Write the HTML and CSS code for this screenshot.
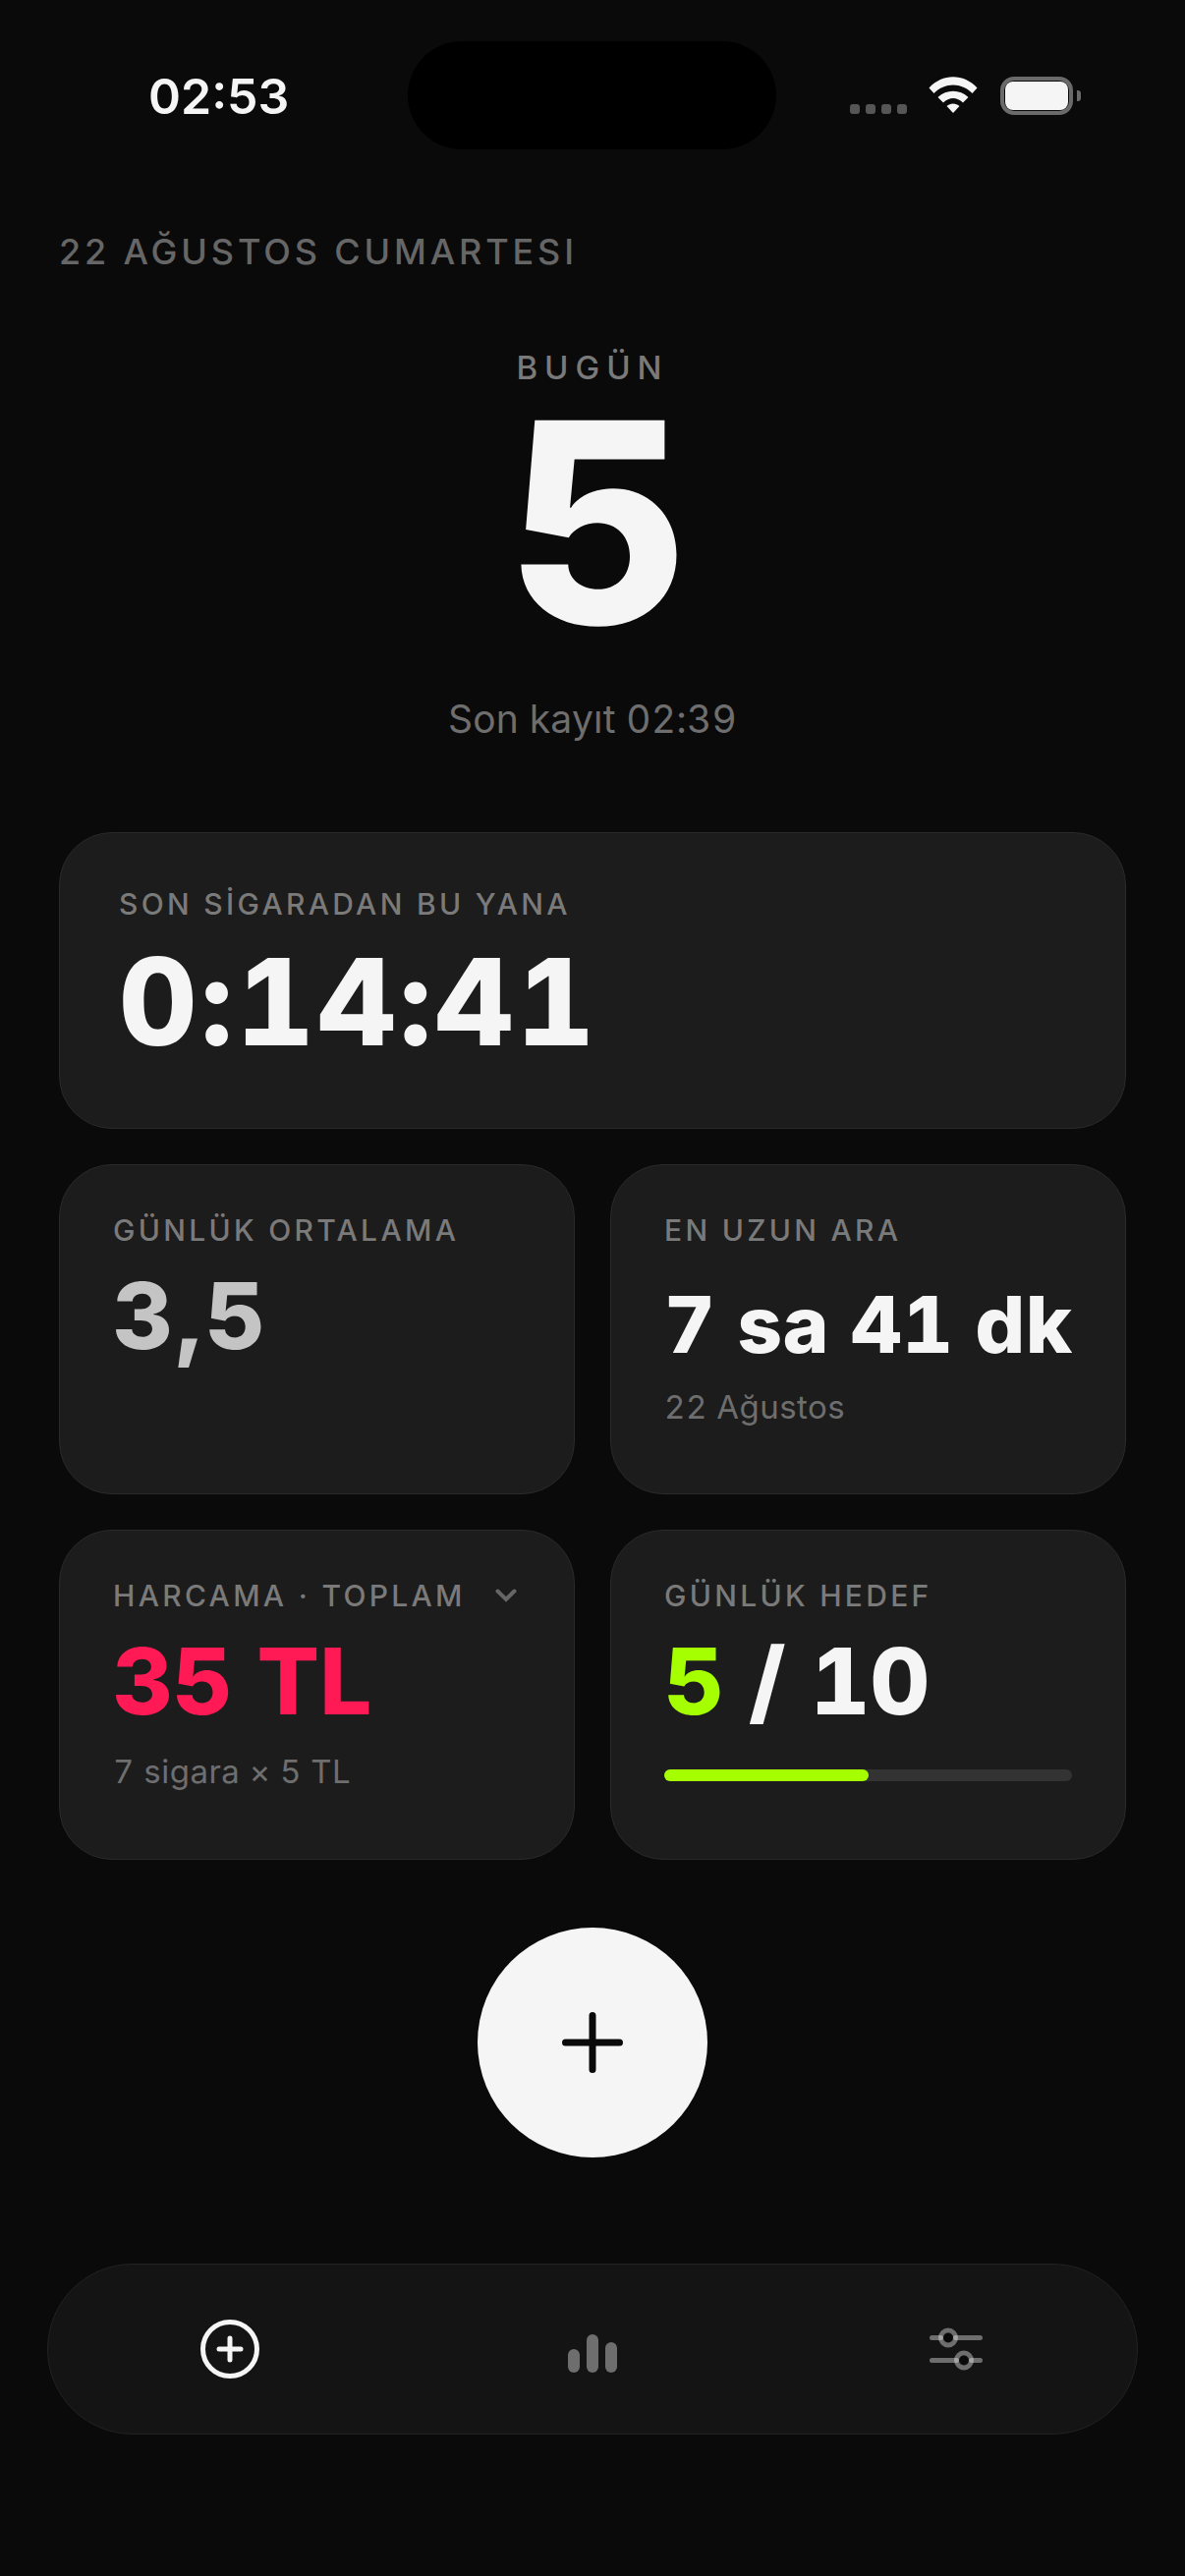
FILE: index.html
```html
<!DOCTYPE html>
<html lang="tr">

<head>
    <meta charset="UTF-8">
    <title>Sigara Takip</title>
    <link rel="stylesheet" href="styles.css">
</head>

<body>
    <div class="screen">
        <header class="status-bar">
            <span class="clock">02:53</span>
            <div class="island"></div>
            <div class="status-icons">
                <div class="signal"><i></i><i></i><i></i><i></i></div>
                <svg class="wifi" width="50" height="38" viewBox="0 0 50 38">
                    <path d="M0.5 11.5 C14 -3.5 36 -3.5 49.5 11.5 L44.5 17 C33.5 5.5 16.5 5.5 5.5 17 Z" fill="#f5f5f5"/>
                    <path d="M9.5 21 C18 12.5 32 12.5 40.5 21 L35 26.5 C29 20.5 21 20.5 15 26.5 Z" fill="#f5f5f5"/>
                    <path d="M18.5 30 C22 26.5 28 26.5 31.5 30 L25 37 Z" fill="#f5f5f5"/>
                </svg>
                <div class="battery"><div class="battery-fill"></div></div>
                <div class="battery-cap"></div>
            </div>
        </header>

        <p class="date">22 AĞUSTOS CUMARTESI</p>

        <section class="today">
            <p class="today-label">BUGÜN</p>
            <p class="today-count">5</p>
            <p class="today-last">Son kayıt 02:39</p>
        </section>

        <section class="card card-wide">
            <p class="card-label">SON SİGARADAN BU YANA</p>
            <p class="timer">0:14:41</p>
        </section>

        <section class="grid">
            <div class="card">
                <p class="card-label">GÜNLÜK ORTALAMA</p>
                <p class="value value-muted">3,5</p>
            </div>
            <div class="card">
                <p class="card-label">EN UZUN ARA</p>
                <p class="value value-sm">7 sa 41 dk</p>
                <p class="card-note note-near">22 Ağustos</p>
            </div>
            <div class="card">
                <div class="label-row">
                    <p class="card-label">HARCAMA · TOPLAM</p>
                    <svg width="22" height="14" viewBox="0 0 22 14">
                        <path d="M2.5 2.5 L11 11 L19.5 2.5" fill="none" stroke="#666" stroke-width="4" stroke-linecap="round"/>
                    </svg>
                </div>
                <p class="value value-red">35 TL</p>
                <p class="card-note">7 sigara × 5 TL</p>
            </div>
            <div class="card">
                <p class="card-label">GÜNLÜK HEDEF</p>
                <p class="value"><span class="value-green">5</span> / 10</p>
                <div class="progress"><div class="progress-fill" style="width: 50%"></div></div>
            </div>
        </section>

        <div class="fab-wrap">
            <button class="fab">
                <svg width="62" height="62" viewBox="0 0 62 62">
                    <path d="M31 3.5 V58.5 M3.5 31 H58.5" stroke="#0a0a0a" stroke-width="7" stroke-linecap="round"/>
                </svg>
            </button>
        </div>

        <nav class="tabs">
            <svg width="60" height="60" viewBox="0 0 60 60">
                <circle cx="30" cy="30" r="27.5" fill="none" stroke="#f5f5f5" stroke-width="5"/>
                <path d="M30 19 V41 M19 30 H41" stroke="#f5f5f5" stroke-width="5" stroke-linecap="round"/>
            </svg>
            <svg class="tab-bars" width="50" height="39" viewBox="0 0 50 39">
                <rect x="0" y="15" width="12" height="24" rx="6" fill="#6e6e6e"/>
                <rect x="19" y="0" width="12" height="39" rx="6" fill="#6e6e6e"/>
                <rect x="38" y="8" width="12" height="31" rx="6" fill="#6e6e6e"/>
            </svg>
            <svg width="54" height="44" viewBox="0 0 54 44">
                <circle cx="19" cy="10.5" r="6" fill="#0a0a0a"/>
                <circle cx="35" cy="33.5" r="6" fill="#0a0a0a"/>
                <g fill="none" stroke="#f5f5f5" stroke-opacity="0.4" stroke-width="5">
                    <path d="M2.5 10.5 H11.5 M26.5 10.5 H51.5 M2.5 33.5 H27.5 M42.5 33.5 H51.5" stroke-linecap="round"/>
                    <circle cx="19" cy="10.5" r="7.5"/>
                    <circle cx="35" cy="33.5" r="7.5"/>
                </g>
            </svg>
        </nav>
    </div>
</body>
</html>
```

FILE: styles.css
```css
* {
    box-sizing: border-box;
    margin: 0;
    padding: 0;
}

body {
    width: 1206px;
    height: 2622px;
    background-color: #0a0a0a;
    font-family: Inter, "Liberation Sans", sans-serif;
    font-optical-sizing: none;
    color: #f5f5f5;
    overflow: hidden;
}

.screen {
    display: flex;
    flex-direction: column;
    height: 2622px;
    padding: 42px 60px 0;
}

.status-bar {
    display: flex;
    align-items: flex-start;
    height: 110px;
    margin: 0 -60px;
    padding: 0 48px 0 151px;
}

.clock {
    width: 264px;
    margin-top: 28px;
    font-size: 50px;
    font-weight: 600;
    line-height: 56px;
}

.island {
    width: 375px;
    height: 110px;
    border-radius: 55px;
    background-color: #000;
}

.status-icons {
    display: flex;
    align-items: flex-end;
    margin-top: 36px;
    margin-left: 75px;
}

.signal {
    display: flex;
    gap: 6px;
    margin-right: 22px;
    margin-bottom: 1px;
}

.signal i {
    width: 10px;
    height: 10px;
    border-radius: 3px;
    background-color: #555;
}

.wifi {
    margin-right: 23px;
    margin-bottom: 1px;
}

.battery {
    width: 74px;
    height: 39px;
    padding: 1px;
    border: 4px solid #6a6a6a;
    border-radius: 14px;
}

.battery-fill {
    height: 100%;
    border-radius: 8px;
    background-color: #f5f5f5;
}

.battery-cap {
    width: 4px;
    height: 11px;
    margin: 0 0 14px 4px;
    border-radius: 0 3px 3px 0;
    background-color: #6a6a6a;
}

.date {
    margin-top: 82px;
    font-size: 36px;
    font-weight: 500;
    line-height: 44px;
    letter-spacing: 3.85px;
    color: #666;
}

.today {
    text-align: center;
}

.today-label {
    margin-top: 76px;
    font-size: 33px;
    font-weight: 500;
    line-height: 40px;
    letter-spacing: 7px;
    color: #7a7a7a;
}

.today-count {
    font-size: 285px;
    font-weight: 800;
    line-height: 275px;
    letter-spacing: -8px;
}

.today-last {
    margin-top: 39px;
    font-size: 39px;
    line-height: 48px;
    letter-spacing: 0.2px;
    font-variant-numeric: tabular-nums;
    color: #6e6e6e;
}

.card {
    min-width: 0;
    padding: 48px 54px;
    background-color: #1c1c1c;
    border: 1px solid #2a2a2a;
    border-radius: 54px;
}

.card-wide {
    height: 302px;
    margin-top: 91px;
    padding: 54px 60px;
}

.card-label {
    font-size: 30px;
    font-weight: 500;
    line-height: 36px;
    letter-spacing: 3.3px;
    color: #7a7a7a;
}

.timer {
    margin-top: 16px;
    font-size: 123px;
    font-weight: 800;
    line-height: 132px;
    letter-spacing: 3.5px;
    font-variant-numeric: tabular-nums;
}

.grid {
    display: grid;
    grid-template-columns: minmax(0, 1fr) minmax(0, 1fr);
    grid-auto-rows: 336px;
    gap: 36px;
    margin-top: 36px;
}

.label-row {
    display: flex;
    align-items: center;
    justify-content: space-between;
    padding-right: 4px;
}

.value {
    margin-top: 17px;
    font-size: 94px;
    font-weight: 800;
    line-height: 104px;
    font-variant-numeric: tabular-nums;
    white-space: nowrap;
}

.value-sm {
    margin-top: 26px;
    font-size: 80px;
    letter-spacing: 0.5px;
}

.value-muted {
    letter-spacing: 4px;
    color: #c4c4c4;
}

.value-red {
    color: #ff1a55;
}

.value-green {
    color: #a6ff00;
}

.card-note {
    margin-top: 20px;
    font-size: 33px;
    line-height: 40px;
    letter-spacing: 0.5px;
    font-variant-numeric: tabular-nums;
    color: #6e6e6e;
}

.note-near {
    margin-top: 12px;
}

.progress {
    height: 12px;
    margin-top: 38px;
    border-radius: 6px;
    background-color: #333;
}

.progress-fill {
    height: 100%;
    border-radius: 6px;
    background-color: #a6ff00;
}

.fab-wrap {
    display: flex;
    justify-content: center;
    margin-top: 69px;
}

.fab {
    display: flex;
    align-items: center;
    justify-content: center;
    width: 234px;
    height: 234px;
    border: none;
    border-radius: 50%;
    background-color: #f5f5f5;
}

.tabs {
    display: flex;
    align-items: center;
    justify-content: space-between;
    height: 174px;
    margin: 108px -12px 0;
    padding: 0 157px 0 155px;
    background-color: #141414;
    border: 1px solid #222;
    border-radius: 87px;
}

.tab-bars {
    margin-top: 9px;
    margin-right: 4px;
}
```
